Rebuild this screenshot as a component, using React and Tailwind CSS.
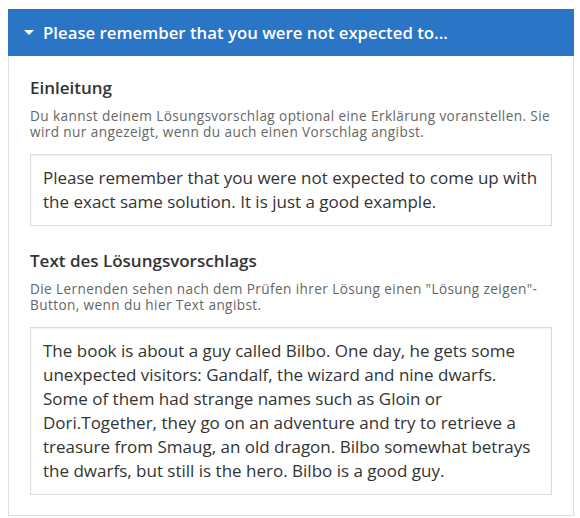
import React from "react";

const Field = ({ title, help, text }) => (
  <div className="flex flex-col">
    <h3 className="text-[17px] leading-6 font-semibold text-[#333]">{title}</h3>
    <p className="mt-2 text-[13.6px] leading-4 tracking-[0.4px] text-[#666]">{help}</p>
    <div className="mt-[14px] border border-[#dcdcdc] shadow-[inset_0_1px_2px_rgba(0,0,0,0.06)] bg-white px-3 py-[11px]">
      <p className="text-[17px] leading-6 text-[#333]">{text}</p>
    </div>
  </div>
);

export default function App() {
  return (
    <div className="w-[580px] h-[518px] bg-white pt-[9px] pl-[8px]" style={{ fontFamily: '"Open Sans", "Liberation Sans", sans-serif' }}>
      <div className="w-[566px] border border-[#dedede] bg-white">
        {/* Header */}
        <div className="h-[47px] -mt-px -mx-px bg-[#2a75c6] flex items-center pl-[16px]">
          <svg width="10" height="6" viewBox="0 0 10 6">
            <path d="M0 0 L10 0 L5 5 Z" fill="#fff" />
          </svg>
          <span className="ml-[9px] text-white text-[16.8px] font-semibold">
            Please remember that you were not expected to...
          </span>
        </div>

        {/* Body */}
        <div className="px-[21px] pt-[20px] pb-[20px] flex flex-col gap-[23px]">
          <Field
            title="Einleitung"
            help="Du kannst deinem Lösungsvorschlag optional eine Erklärung voranstellen. Sie wird nur angezeigt, wenn du auch einen Vorschlag angibst."
            text="Please remember that you were not expected to come up with the exact same solution. It is just a good example."
          />
          <Field
            title="Text des Lösungsvorschlags"
            help={'Die Lernenden sehen nach dem Prüfen ihrer Lösung einen "Lösung zeigen"-Button, wenn du hier Text angibst.'}
            text="The book is about a guy called Bilbo. One day, he gets some unexpected visitors: Gandalf, the wizard and nine dwarfs. Some of them had strange names such as Gloin or Dori.Together, they go on an adventure and try to retrieve a treasure from Smaug, an old dragon. Bilbo somewhat betrays the dwarfs, but still is the hero. Bilbo is a good guy."
          />
        </div>
      </div>
    </div>
  );
}
